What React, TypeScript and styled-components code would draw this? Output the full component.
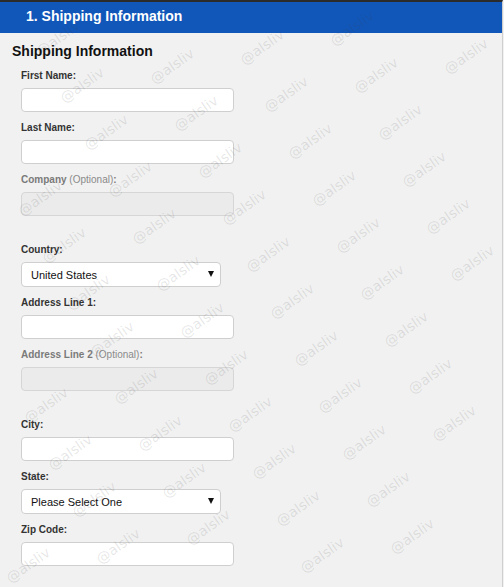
import React from "react";
import styled, { createGlobalStyle } from "styled-components";

const GlobalStyle = createGlobalStyle`
  html, body {
    margin: 0;
    padding: 0;
    background: #f1f1f1;
  }
  body {
    font-family: "Liberation Sans", Arial, sans-serif;
    overflow: hidden;
  }
`;

const Page = styled.div`
  position: relative;
  width: 503px;
  height: 587px;
  background: #f1f1f1;
  border-top: 2px solid #2b2b2b;
  border-right: 1px solid #cfcfcf;
  box-sizing: border-box;
  overflow: hidden;
`;

const StepHeader = styled.div`
  height: 31px;
  background: #1157b9;
  color: #fff;
  font-size: 14px;
  font-weight: bold;
  line-height: 29px;
  padding-left: 26px;
`;

const Form = styled.div`
  padding: 9px 0 0 12px;
`;

const Title = styled.h2`
  margin: 0 0 10px;
  font-size: 14px;
  line-height: 18px;
  font-weight: bold;
  color: #111;
`;

const Field = styled.div<{ $extra?: boolean }>`
  padding-left: 9px;
  margin-bottom: ${(p) => (p.$extra ? "28px" : "10px")};
`;

const Label = styled.label<{ $muted?: boolean }>`
  display: block;
  font-size: 10px;
  line-height: 12px;
  font-weight: bold;
  color: ${(p) => (p.$muted ? "#7a7a7a" : "#333")};
  margin-bottom: 6px;
`;

const Optional = styled.span`
  font-weight: normal;
  color: #8a8a8a;
`;

const Input = styled.input`
  display: block;
  box-sizing: border-box;
  width: 213px;
  height: 24px;
  margin: 0;
  border: 1px solid #cfcfcf;
  border-radius: 4px;
  background: #fff;
  outline: none;
  &:disabled {
    background: #ebebeb;
    border-color: #d6d6d6;
  }
`;

const Select = styled.div`
  box-sizing: border-box;
  width: 200px;
  height: 25px;
  border: 1px solid #cfcfcf;
  border-radius: 4px;
  background: #fff;
  display: flex;
  align-items: center;
  justify-content: space-between;
  padding: 0 6px 0 9px;
  font-size: 11px;
  color: #111;
`;

const Arrow = styled.span`
  width: 0;
  height: 0;
  border-left: 3px solid transparent;
  border-right: 3px solid transparent;
  border-top: 6px solid #111;
  margin-top: -1px;
`;

const Watermarks = styled.div`
  position: absolute;
  inset: 0;
  pointer-events: none;
`;

const Mark = styled.span`
  position: absolute;
  font-family: "DejaVu Sans", sans-serif;
  font-size: 14px;
  color: rgba(60, 60, 60, 0.13);
  transform: translate(-50%, -50%) rotate(-35deg);
  white-space: nowrap;
`;

const marks: { x: number; y: number }[] = [];
for (let i = -6; i <= 6; i++) {
  for (let j = -3; j <= 14; j++) {
    const x = 262 + i * 90 + j * 24;
    const y = 45 - i * 19 + j * 47;
    if (x > 26 && x < 476 && y > 22 && y < 565) marks.push({ x, y });
  }
}

export default function App() {
  return (
    <>
      <GlobalStyle />
      <Page>
        <StepHeader>1. Shipping Information</StepHeader>
        <Form>
          <Title>Shipping Information</Title>
          <Field>
            <Label>First Name:</Label>
            <Input />
          </Field>
          <Field>
            <Label>Last Name:</Label>
            <Input />
          </Field>
          <Field $extra>
            <Label $muted>
              Company <Optional>(Optional)</Optional>:
            </Label>
            <Input disabled />
          </Field>
          <Field>
            <Label>Country:</Label>
            <Select>
              United States
              <Arrow />
            </Select>
          </Field>
          <Field>
            <Label>Address Line 1:</Label>
            <Input />
          </Field>
          <Field $extra>
            <Label $muted>
              Address Line 2 <Optional>(Optional)</Optional>:
            </Label>
            <Input disabled />
          </Field>
          <Field>
            <Label>City:</Label>
            <Input />
          </Field>
          <Field>
            <Label>State:</Label>
            <Select>
              Please Select One
              <Arrow />
            </Select>
          </Field>
          <Field>
            <Label>Zip Code:</Label>
            <Input />
          </Field>
        </Form>
        <Watermarks>
          {marks.map((m, k) => (
            <Mark key={k} style={{ left: m.x, top: m.y }}>
              @alsliv
            </Mark>
          ))}
        </Watermarks>
      </Page>
    </>
  );
}
